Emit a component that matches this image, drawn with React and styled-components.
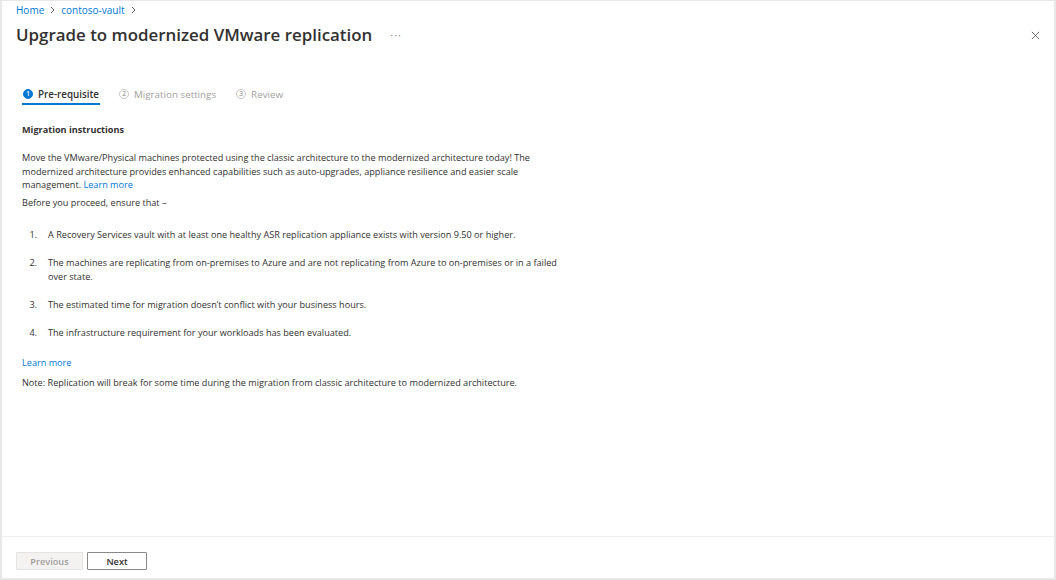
import React from 'react'
import styled, { createGlobalStyle } from 'styled-components'

const GlobalStyle = createGlobalStyle`
    html, body {
        margin: 0;
        padding: 0;
        background: #fff;
    }
    * {
        box-sizing: border-box;
    }
`

const font = `"Segoe UI", "Open Sans", "Noto Sans", sans-serif`

const Frame = styled.div`
    width: 1056px;
    height: 580px;
    border: 2px solid #e8e8e8;
    border-top-width: 1px;
    display: flex;
    flex-direction: column;
    font-family: ${font};
    color: #323130;
    background: #fff;
`

const Header = styled.div`
    padding: 2px 11px 0 14px;
`

const Breadcrumb = styled.nav`
    display: flex;
    align-items: center;
    gap: 5px;
    font-size: 10px;
    line-height: 14px;
`

const Crumb = styled.a`
    color: #0078d4;
    text-decoration: none;
`

const Chevron = styled.svg`
    width: 7px;
    height: 8px;
    stroke: #605e5c;
    fill: none;
`

const TitleRow = styled.div`
    display: flex;
    align-items: center;
    margin-top: 4px;
    height: 28px;
`

const Title = styled.h1`
    margin: 0;
    font-size: 16.9px;
    font-weight: 600;
    line-height: 28px;
    color: #323130;
`

const More = styled.span`
    margin-left: 18px;
    font-size: 11px;
    color: #8a8886;
    letter-spacing: 1px;
    position: relative;
    top: -1px;
`

const CloseButton = styled.button`
    margin-left: auto;
    width: 16px;
    height: 16px;
    padding: 0;
    border: none;
    background: transparent;
    display: flex;
    align-items: center;
    justify-content: center;
    svg {
        width: 9px;
        height: 9px;
        stroke: #605e5c;
    }
`

const Tabs = styled.div`
    display: flex;
    gap: 18px;
    padding-left: 20px;
    margin-top: 36px;
`

const Tab = styled.div`
    display: flex;
    align-items: center;
    gap: 5px;
    height: 20px;
    padding: 0 1px;
    border-bottom: 2px solid ${props => props.active ? '#0078d4' : 'transparent'};
    font-size: 9.8px;
    font-weight: ${props => props.active ? 600 : 400};
    color: ${props => props.active ? '#323130' : '#a19f9d'};
`

const StepBadge = styled.span`
    width: 10px;
    height: 10px;
    border-radius: 50%;
    display: inline-flex;
    align-items: center;
    justify-content: center;
    font-size: 6.5px;
    font-weight: 600;
    line-height: 1;
    background: ${props => props.active ? '#0078d4' : '#fff'};
    color: ${props => props.active ? '#fff' : '#a19f9d'};
    border: 1px solid ${props => props.active ? '#0078d4' : '#c8c6c4'};
`

const Content = styled.div`
    flex: 1;
    padding-left: 20px;
    font-size: 9.15px;
    line-height: 13.5px;
`

const Heading = styled.h2`
    margin: 18px 0 0 0;
    font-size: 9.15px;
    line-height: 14px;
    font-weight: 700;
`

const Paragraph = styled.p`
    margin: ${props => props.mt || 0}px 0 0 0;
    max-width: 516px;
`

const Link = styled.a`
    color: #0078d4;
    text-decoration: none;
`

const List = styled.ol`
    list-style: none;
    margin: 18.5px 0 0 0;
    padding: 0;
    max-width: 548px;
`

const Item = styled.li`
    display: grid;
    grid-template-columns: 26px 1fr;
    & + & {
        margin-top: 14.5px;
    }
`

const ItemNumber = styled.span`
    text-align: right;
    padding-right: 11px;
`

const Footer = styled.div`
    border-top: 1px solid #efefef;
    padding: 15px 14px 8px 14px;
    display: flex;
    gap: 4px;
`

const Button = styled.button`
    height: 18px;
    min-width: ${props => props.w}px;
    padding: 0 10px;
    font-family: ${font};
    font-size: 9.2px;
    font-weight: 600;
    border-radius: 1px;
    border: 1px solid ${props => props.disabled ? '#e6e4e2' : '#8a8886'};
    background: ${props => props.disabled ? '#f3f2f1' : '#fff'};
    color: ${props => props.disabled ? '#a19f9d' : '#323130'};
`

const steps = ['Pre-requisite', 'Migration settings', 'Review']

const items = [
  'A Recovery Services vault with at least one healthy ASR replication appliance exists with version 9.50 or higher.',
  'The machines are replicating from on-premises to Azure and are not replicating from Azure to on-premises or in a failed over state.',
  'The estimated time for migration doesn\u2019t conflict with your business hours.',
  'The infrastructure requirement for your workloads has been evaluated.',
]

const ChevronIcon = () => (
  <Chevron viewBox="0 0 7 8">
    <path d="M2 1 L5 4 L2 7" strokeWidth="1" />
  </Chevron>
)

const App = () => {
  return (
    <>
      <GlobalStyle />
      <Frame>
        <Header>
          <Breadcrumb>
            <Crumb href="#">Home</Crumb>
            <ChevronIcon />
            <Crumb href="#">contoso-vault</Crumb>
            <ChevronIcon />
          </Breadcrumb>
          <TitleRow>
            <Title>Upgrade to modernized VMware replication</Title>
            <More>···</More>
            <CloseButton aria-label="Close">
              <svg viewBox="0 0 10 10">
                <path d="M1 1 L9 9 M9 1 L1 9" strokeWidth="1" />
              </svg>
            </CloseButton>
          </TitleRow>
        </Header>

        <Tabs>
          {steps.map((s, i) => (
            <Tab key={s} active={i === 0}>
              <StepBadge active={i === 0}>{i + 1}</StepBadge>
              {s}
            </Tab>
          ))}
        </Tabs>

        <Content>
          <Heading>Migration instructions</Heading>
          <Paragraph mt={14}>
            Move the VMware/Physical machines protected using the classic architecture to the modernized architecture today! The modernized architecture provides enhanced capabilities such as auto-upgrades, appliance resilience and easier scale management. <Link href="#">Learn more</Link>
          </Paragraph>
          <Paragraph mt={4.5}>Before you proceed, ensure that –</Paragraph>
          <List>
            {items.map((t, i) => (
              <Item key={i}>
                <ItemNumber>{i + 1}.</ItemNumber>
                <span>{t}</span>
              </Item>
            ))}
          </List>
          <Paragraph mt={16.5}><Link href="#">Learn more</Link></Paragraph>
          <Paragraph mt={6.5}>
            Note: Replication will break for some time during the migration from classic architecture to modernized architecture.
          </Paragraph>
        </Content>

        <Footer>
          <Button disabled w={67}>Previous</Button>
          <Button w={60}>Next</Button>
        </Footer>
      </Frame>
    </>
  )
}

export default App
